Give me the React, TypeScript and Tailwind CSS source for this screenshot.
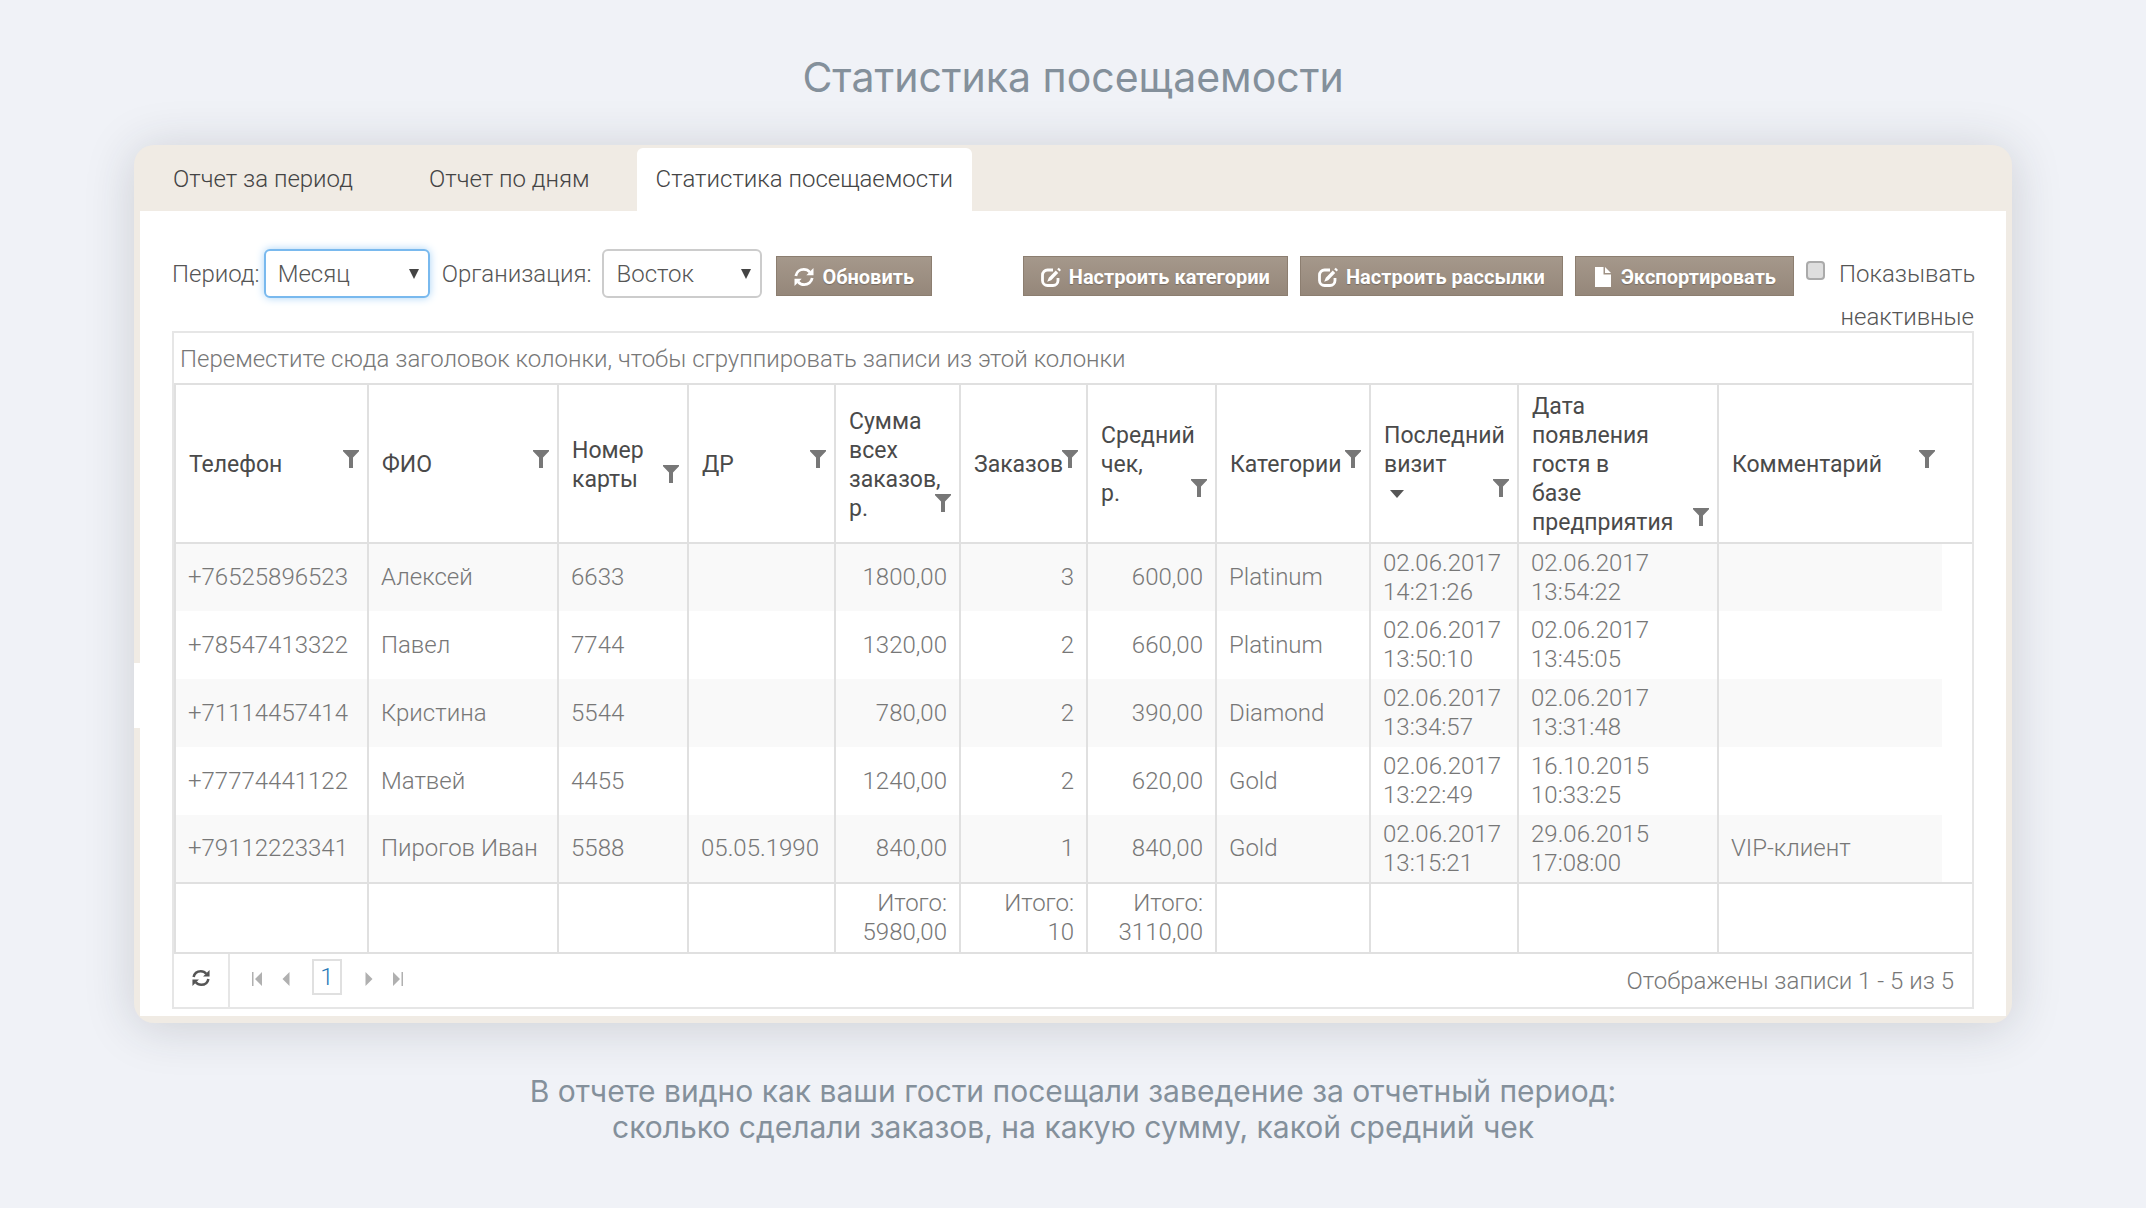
import React, { useState } from 'react';

const columns = [
  { title: ['Телефон'], width: 'w-[193px]' },
  { title: ['ФИО'], width: 'w-[190px]' },
  { title: ['Номер', 'карты'], width: 'w-[130px]' },
  { title: ['ДР'], width: 'w-[147px]' },
  { title: ['Сумма', 'всех', 'заказов,', 'р.'], width: 'w-[125px]', numeric: true },
  { title: ['Заказов'], width: 'w-[127px]', numeric: true },
  { title: ['Средний', 'чек,', 'р.'], width: 'w-[129px]', numeric: true },
  { title: ['Категории'], width: 'w-[154px]' },
  { title: ['Последний', 'визит'], width: 'w-[148px]', sorted: true },
  { title: ['Дата', 'появления', 'гостя в', 'базе', 'предприятия'], width: 'w-[200px]' },
  { title: ['Комментарий'], width: 'w-auto' },
];

const rows = [
  ['+76525896523', 'Алексей', '6633', '', '1800,00', '3', '600,00', 'Platinum', '02.06.2017 14:21:26', '02.06.2017 13:54:22', ''],
  ['+78547413322', 'Павел', '7744', '', '1320,00', '2', '660,00', 'Platinum', '02.06.2017 13:50:10', '02.06.2017 13:45:05', ''],
  ['+71114457414', 'Кристина', '5544', '', '780,00', '2', '390,00', 'Diamond', '02.06.2017 13:34:57', '02.06.2017 13:31:48', ''],
  ['+77774441122', 'Матвей', '4455', '', '1240,00', '2', '620,00', 'Gold', '02.06.2017 13:22:49', '16.10.2015 10:33:25', ''],
  ['+79112223341', 'Пирогов Иван', '5588', '05.05.1990', '840,00', '1', '840,00', 'Gold', '02.06.2017 13:15:21', '29.06.2015 17:08:00', 'VIP-клиент'],
];

const totals = ['', '', '', '', '5980,00', '10', '3110,00', '', '', '', ''];

const tabs = [
  { title: 'Отчет за период', gap: 'mr-[38px]' },
  { title: 'Отчет по дням', gap: 'mr-7' },
  { title: 'Статистика посещаемости', gap: '' },
];

function RefreshIcon({ className }: { className?: string }) {
  return (
    <svg viewBox="0 0 20 20" className={className} fill="none" stroke="currentColor" strokeWidth="2.8" aria-hidden="true">
      <path d="M1.800 9C2.600 4.800 6 2.400 9.800 2.400c2.600 0 4.600 1 6 2.800" />
      <path d="M18.200 11c-.8 4.200-4.200 6.600-8 6.600-2.600 0-4.600-1-6-2.800" />
      <path d="M19.500 1v7.200h-7.200z" fill="currentColor" stroke="none" />
      <path d="M.5 19v-7.200h7.200z" fill="currentColor" stroke="none" />
    </svg>
  );
}

function EditIcon({ className }: { className?: string }) {
  return (
    <svg viewBox="0 0 20 20" className={className} fill="none" aria-hidden="true">
      <path d="M12 3H6.500A5 5 0 0 0 1.500 8v5.500a5 5 0 0 0 5 5H12a5 5 0 0 0 5-5V11" stroke="currentColor" strokeWidth="2.8" />
      <path d="M14.800 3.600l2.400 2.400-7 7.200-4 1.600 1.600-4z" fill="currentColor" />
      <path d="M16.200 2.200L17.800.8l2.200 2.200-1.500 1.600z" fill="currentColor" />
    </svg>
  );
}

function FileIcon({ className }: { className?: string }) {
  return (
    <svg viewBox="-2 0 20 20" className={className} fill="currentColor" aria-hidden="true">
      <path d="M0 0h8.500v7.500H16V20H0z" />
      <path d="M10 0l6 6h-6z" />
    </svg>
  );
}

function FilterIcon({ className }: { className?: string }) {
  return (
    <svg viewBox="0 0 16 18" className={className} fill="currentColor" aria-hidden="true">
      <path d="M0 0h16v1.200L10 7.500V18H6V7.500L0 1.200z" />
    </svg>
  );
}

function ToolbarButton({ icon, children }: { icon: React.ReactNode; children: React.ReactNode }) {
  return (
    <button className="h-10 flex items-center justify-center gap-2 px-[17px] pt-px border border-[#8c7e70] bg-linear-to-b from-[#a5988b] to-[#95877a] text-white text-[20px] font-bold whitespace-nowrap text-shadow-[0_1px_1px_rgb(0_0_0/0.25)]">
      {icon}
      {children}
    </button>
  );
}

function Select({ id, options, focused }: { id: string; options: string[]; focused?: boolean }) {
  return (
    <div className="relative">
      <select
        id={id}
        className={`appearance-none h-[49px] pl-3 rounded-md border-2 bg-white text-[#555] outline-none ${
          focused ? 'w-[166px] border-[#79b9ee] shadow-[0_0_8px_#a9d4f7]' : 'w-40 border-[#ccc]'
        }`}
      >
        {options.map((option) => (
          <option key={option}>{option}</option>
        ))}
      </select>
      <svg viewBox="0 0 10 10" className="absolute right-[11px] top-5 w-2.5 h-2.5 pointer-events-none" fill="#444" aria-hidden="true">
        <path d="M0 0h10L5 10z" />
      </svg>
    </div>
  );
}

function PagerButton({ label, path }: { label: string; path: string }) {
  return (
    <button aria-label={label} className="w-[29px] h-9 flex items-center justify-center text-[#b0b0b0]">
      <svg viewBox="0 0 12 14" className="w-3 h-3.5" fill="currentColor" aria-hidden="true">
        <path d={path} />
      </svg>
    </button>
  );
}

export default function App() {
  const [activeTab, setActiveTab] = useState(2);
  const [showInactive, setShowInactive] = useState(false);

  return (
    <div className="min-h-screen bg-[#f0f2f7] font-['Inter',sans-serif] text-[#84909b]">
      <h1 className="pt-[47px] pb-[38px] text-center text-[41px] leading-[60px] font-normal">Статистика посещаемости</h1>

      <main className="relative mx-[134px] rounded-[20px] bg-[#f0ebe4] px-1.5 pb-[7px] shadow-[0_4px_50px_rgb(40_45_55/0.18)] font-['Roboto',sans-serif] font-light text-[24px]">
        {/* Tabs */}
        <nav className="flex pt-[3px] h-[66px] pl-3.5">
          {tabs.map((tab, i) => (
            <button
              key={tab.title}
              onClick={() => setActiveTab(i)}
              className={`h-full px-[19px] pb-0.5 rounded-t-md text-[#444] whitespace-nowrap ${tab.gap} ${activeTab === i ? 'bg-white' : ''}`}
            >
              {tab.title}
            </button>
          ))}
        </nav>

        <div className="bg-white px-8 pb-[7px]">
          {/* Toolbar */}
          <div className="flex items-start h-[120px] pt-[38px] text-[#555]">
            <label htmlFor="period" className="leading-[50px] mr-1">Период:</label>
            <Select id="period" options={['Месяц', 'Неделя', 'День']} focused />
            <label htmlFor="organization" className="leading-[50px] ml-3 mr-[11px]">Организация:</label>
            <Select id="organization" options={['Восток', 'Запад']} />
            <div className="flex flex-1 pt-[7px] pl-3.5">
              <ToolbarButton icon={<RefreshIcon className="w-5 h-5" />}>Обновить</ToolbarButton>
            </div>
            <div className="flex gap-3 pt-[7px]">
              <ToolbarButton icon={<EditIcon className="w-5 h-5" />}>Настроить категории</ToolbarButton>
              <ToolbarButton icon={<EditIcon className="w-5 h-5" />}>Настроить рассылки</ToolbarButton>
              <ToolbarButton icon={<FileIcon className="w-5 h-5" />}>Экспортировать</ToolbarButton>
            </div>
            <label className="flex gap-3.5 ml-3 text-right leading-[43px]">
              <input
                type="checkbox"
                checked={showInactive}
                onChange={(e) => setShowInactive(e.target.checked)}
                className="appearance-none mt-3 w-[19px] h-[19px] shrink-0 rounded-sm border-2 border-[#aaa] bg-[#dedede] checked:bg-[#79b9ee]"
              />
              <span className="w-[135px] pt-1">Показывать неактивные</span>
            </label>
          </div>

          {/* Grid */}
          <div className="border-2 border-[#e6e6e6]">
            <div className="h-[50px] leading-[52px] px-1.5 text-[#777]">
              Переместите сюда заголовок колонки, чтобы сгруппировать записи из этой колонки
            </div>

            <table className="w-full table-fixed border-collapse text-left leading-[29px] text-[#777]">
              <colgroup>
                {columns.map((col, i) => (
                  <col key={i} className={col.width} />
                ))}
                <col className="w-[30px]" />
              </colgroup>
              <thead>
                <tr className="h-[159px] border-y-2 border-[#e0e0e0]">
                  {columns.map((col, i) => (
                    <th
                      key={i}
                      colSpan={i === columns.length - 1 ? 2 : 1}
                      className={`pt-1.5 pb-1 pl-[13px] border-l-2 border-[#e0e0e0] text-[23px] font-normal text-[#4a4a4a] ${
                        i === columns.length - 1 ? 'pr-[37px]' : 'pr-2'
                      }`}
                    >
                      <div className="flex items-end">
                        <span className="flex-1 w-0">
                          {col.title.map((line) => (
                            <span key={line} className="block whitespace-nowrap">{line}</span>
                          ))}
                          {col.sorted && (
                            <span className="flex items-center h-[29px] pl-1.5">
                              <svg viewBox="0 0 14 8" className="w-3.5 h-2" fill="#555" aria-hidden="true">
                                <path d="M0 0h14L7 8z" />
                              </svg>
                            </span>
                          )}
                        </span>
                        <button aria-label={`Фильтр: ${col.title.join(' ')}`} className="pb-[11px]">
                          <FilterIcon className="w-4 h-[18px] text-[#777]" />
                        </button>
                      </div>
                    </th>
                  ))}
                </tr>
              </thead>
              <tbody>
                {rows.map((row) => (
                  <tr key={row[0]} className="group h-[68px]">
                    {row.map((cell, i) => (
                      <td
                        key={i}
                        className={`px-3 border-l-2 border-[#e0e0e0] group-odd:bg-[#f9f9f9] ${columns[i].numeric ? 'text-right' : ''}`}
                      >
                        {cell}
                      </td>
                    ))}
                    <td />
                  </tr>
                ))}
              </tbody>
              <tfoot>
                <tr className="h-[70px] border-y-2 border-[#e0e0e0]">
                  {totals.map((total, i) => (
                    <td
                      key={i}
                      colSpan={i === columns.length - 1 ? 2 : 1}
                      className={`px-3 border-l-2 border-[#e0e0e0] ${columns[i].numeric ? 'text-right' : ''}`}
                    >
                      {total && (
                        <>
                          Итого:
                          <br />
                          {total}
                        </>
                      )}
                    </td>
                  ))}
                </tr>
              </tfoot>
            </table>

            {/* Pager */}
            <div className="flex items-center h-[53px] text-[#777]">
              <button aria-label="Обновить таблицу" className="flex items-center justify-center self-stretch w-14 pb-1.5 border-r-2 border-[#e6e6e6]">
                <RefreshIcon className="w-[18px] h-[18px] text-[#555]" />
              </button>
              <div className="flex items-center ml-3 pb-1">
                <PagerButton label="Первая страница" path="M1 0h1.500v14H1zM11 0v14L4 7z" />
                <PagerButton label="Предыдущая страница" path="M9.500 0v14l-7-7z" />
                <button className="w-[30px] h-9 mx-3 mb-1 border-2 border-[#e0e0e0] leading-7 text-[#2a7ab8]">1</button>
                <PagerButton label="Следующая страница" path="M2.500 0v14l7-7z" />
                <PagerButton label="Последняя страница" path="M1 0v14l7-7zM9.500 0H11v14H9.500z" />
              </div>
              <span className="ml-auto mr-[18px]">Отображены записи 1 - 5 из 5</span>
            </div>
          </div>
        </div>

        {/* Side panel handle */}
        <div className="absolute left-0 top-[518px] w-1.5 h-[65px] bg-white" />
      </main>

      <p className="pt-[50px] pb-8 text-center text-[30px] leading-9">
        В отчете видно как ваши гости посещали заведение за отчетный период:
        <br />
        сколько сделали заказов, на какую сумму, какой средний чек
      </p>
    </div>
  );
}
